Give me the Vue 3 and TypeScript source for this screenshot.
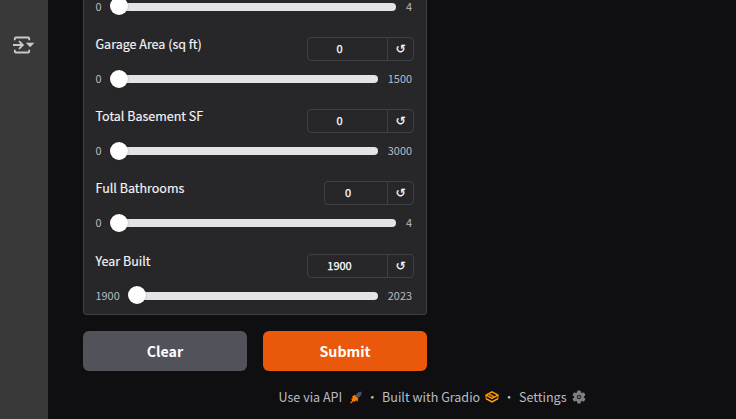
<script setup lang="ts">
interface Field {
  label: string
  min: number
  max: number
  value: number
}

const fields: Field[] = [
  { label: '', min: 0, max: 4, value: 0 },
  { label: 'Garage Area (sq ft)', min: 0, max: 1500, value: 0 },
  { label: 'Total Basement SF', min: 0, max: 3000, value: 0 },
  { label: 'Full Bathrooms', min: 0, max: 4, value: 0 },
  { label: 'Year Built', min: 1900, max: 2023, value: 1900 },
]
</script>

<template>
  <div class="page">
    <aside class="rail">
      <svg class="rail-icon" width="24" height="20" viewBox="0 0 24 20" fill="none" stroke="#c9c9c9" stroke-width="1.8">
        <path d="M2.8 5.2V3.6Q2.8 2.5 3.9 2.5H16.1Q17.2 2.5 17.2 3.6V5.2" />
        <path d="M2.8 14.8V16.4Q2.8 17.5 3.9 17.5H16.1Q17.2 17.5 17.2 16.4V14.8" />
        <path d="M1 10H10.6M7 6.1L10.9 10L7 13.9" />
        <path d="M13.8 7.8H22.4L18.1 12.2Z" fill="#c9c9c9" stroke="none" />
      </svg>
    </aside>
    <main class="content">
      <section class="panel">
        <div v-for="(field, i) in fields" :key="i" class="field">
          <div v-if="field.label" class="head">
            <label class="label">{{ field.label }}</label>
            <div class="number" :class="{ narrow: field.max < 10 }">
              <span class="value">{{ field.value }}</span>
              <button class="reset" type="button">↺</button>
            </div>
          </div>
          <div class="slider">
            <span class="bound">{{ field.min }}</span>
            <div class="track"><span class="thumb"></span></div>
            <span class="bound">{{ field.max }}</span>
          </div>
        </div>
      </section>
      <div class="actions">
        <button class="btn clear" type="button">Clear</button>
        <button class="btn submit" type="button">Submit</button>
      </div>
      <footer class="footer">
        <span>Use via API</span>
        <svg class="rocket" width="12" height="13" viewBox="0 0 12 13">
          <path d="M5 4.6L8.1 1.5Q9.5.6 11.6.8Q11.8 3 10.8 4.4L7.8 7.6Z" fill="#475569" />
          <path d="M4.6 3.9L8.3 7.7L7.4 10.7L5.8 9.2L4.8 10.8L3.4 10.2L1 12.5L.2 11.7L2.1 9.4L1.2 8L3 6.8L1.9 5.4Z" fill="#ff7c00" />
        </svg>
        <span class="dot">·</span>
        <span>Built with Gradio</span>
        <svg class="gradio" width="14" height="12" viewBox="0 0 14 12" fill="none" stroke="#ff9d00" stroke-width="1.6" stroke-linejoin="round">
          <path d="M7 .9L13 4.1L7 7.4L1 4.1Z" />
          <path d="M4 3.3L10 6.2" stroke="#f97700" />
          <path d="M1 7.6L7 10.9L13 7.6" stroke="#ffad08" />
          <path d="M1 4.3V7.5M13 4.3V7.5" stroke="#f97700" stroke-width="1.2" />
        </svg>
        <span class="dot">·</span>
        <span>Settings</span>
        <svg class="gear" width="14" height="14" viewBox="0 0 14 14">
          <g fill="#808080">
            <rect v-for="n in 3" :key="n" x="5.2" y=".4" width="3.6" height="13.2" rx=".8" :transform="`rotate(${(n - 1) * 60} 7 7)`" />
            <circle cx="7" cy="7" r="4.9" />
          </g>
          <circle cx="7" cy="7" r="2.3" fill="#2b2b2d" />
          <circle cx="7" cy="7" r="1.3" fill="#6a6a6a" />
        </svg>
      </footer>
    </main>
  </div>
</template>

<style>
html,
body {
  margin: 0;
  background: #0f0f11;
}
</style>

<style scoped>
.page {
  display: flex;
  width: 736px;
  height: 419px;
  overflow: hidden;
  background: #0f0f11;
  color: #f4f4f5;
  font-family: "Noto Sans CJK SC", "Noto Sans", sans-serif;
}
.rail {
  flex: none;
  width: 48px;
  box-sizing: border-box;
  padding: 35px 0 0 12px;
  background: #393939;
}
.rail-icon {
  display: block;
}
.content {
  flex: 1;
  padding-left: 35px;
}
.panel {
  display: flex;
  flex-direction: column;
  justify-content: flex-end;
  gap: 21.2px;
  width: 344px;
  height: 315px;
  box-sizing: border-box;
  padding: 0 12px 9.4px 11.5px;
  border: 1px solid #3f3f46;
  border-top: 0;
  border-radius: 0 0 4px 4px;
  background: #27272a;
}
.field {
  display: flex;
  flex: none;
  flex-direction: column;
  justify-content: flex-end;
}
.head {
  display: flex;
  justify-content: space-between;
  height: 24px;
  margin-bottom: 9px;
}
.label {
  font-size: 12.5px;
  line-height: 14.4px;
  white-space: nowrap;
  -webkit-text-stroke: 0.15px currentColor;
}
.number {
  display: flex;
  width: 107px;
  height: 24px;
  box-sizing: border-box;
  border: 1px solid #3f3f46;
  border-radius: 4px;
}
.number.narrow {
  width: 90px;
}
.value {
  flex: 1;
  padding-right: 16px;
  font-size: 11px;
  line-height: 21.4px;
  text-align: center;
  color: #fff;
  -webkit-text-stroke: 0.25px currentColor;
}
.reset {
  width: 26px;
  padding: 0;
  border: 0;
  border-left: 1px solid #3f3f46;
  background: none;
  color: #fff;
  font: 12px/20px "DejaVu Sans", sans-serif;
  -webkit-text-stroke: 0.2px currentColor;
}
.slider {
  display: flex;
  align-items: center;
  gap: 9px;
  height: 18px;
  padding-right: 2.5px;
}
.bound {
  margin-top: -1px;
  font-size: 10.9px;
  line-height: 17px;
  color: #bbbbc2;
}
.bound:last-child {
  margin-right: -0.5px;
  margin-left: 0.5px;
}
.track {
  display: flex;
  flex: 1;
  align-items: center;
  height: 8px;
  border-radius: 4px;
  background: #e4e4e7;
}
.thumb {
  width: 18px;
  height: 18px;
  margin: -1px 0 0 -1px;
  border-radius: 50%;
  background: #fff;
  box-shadow: 0 0 2px rgba(0, 0, 0, 0.3);
}
.actions {
  display: flex;
  gap: 16px;
  width: 344px;
  margin-top: 16px;
}
.btn {
  flex: 1;
  height: 40px;
  padding: 0;
  border: 0;
  border-radius: 6px;
  color: #fff;
  font-family: inherit;
  font-size: 14.2px;
  font-weight: 700;
  line-height: 40px;
}
.clear {
  background: #52525b;
}
.submit {
  background: #ea580c;
}
.footer {
  display: flex;
  align-items: center;
  height: 20px;
  margin: 16px 0 0 195.5px;
  font-size: 12.55px;
  line-height: 20px;
  color: #bbbbc2;
  white-space: nowrap;
}
.rocket {
  margin-left: 8px;
}
.gradio {
  margin-left: 5px;
}
.gear {
  margin-left: 5.5px;
}
.dot {
  width: 19.8px;
  text-align: center;
}
</style>
